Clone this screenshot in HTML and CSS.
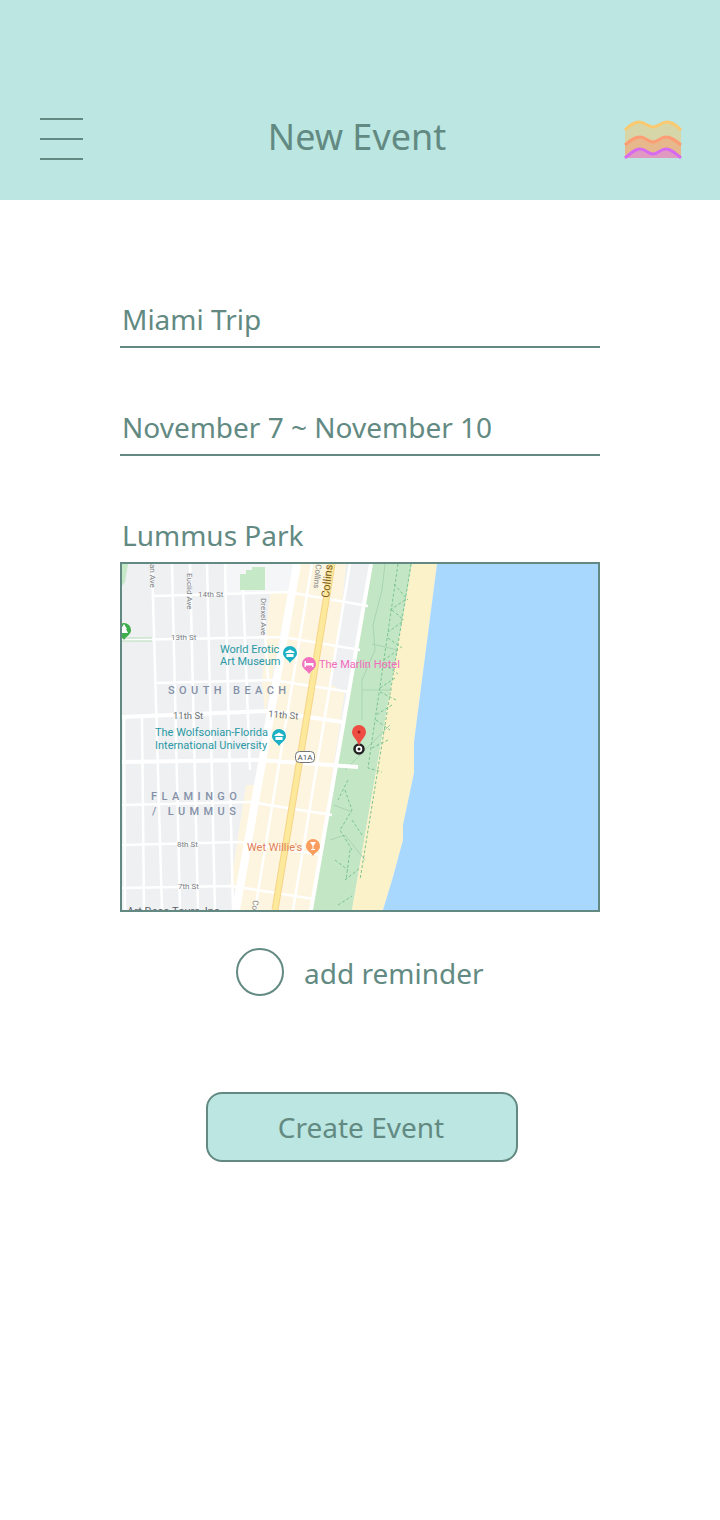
FILE: index.html
```html
<!DOCTYPE html>
<html lang="en">
<head>
  <meta charset="UTF-8">
  <meta name="viewport" content="width=device-width, initial-scale=1.0">
  <title>New Event</title>
  <link rel="stylesheet" href="styles.css">
</head>
<body>
  <!-- top bar -->
  <header class="top-bar">
    <div class="menu-icon"><span></span><span></span><span></span></div>
    <h1 class="top-title">New Event</h1>
    <svg class="logo" viewBox="0 0 60 42" width="60" height="42">
      <path d="M2 11C8 5 12 3 16 3C22 3 25 8 30 8C35 8 38 3 44 3C48 3 52 5 58 11V39H2Z" fill="#d6d6a8"/>
      <path d="M2 26C8 21 12 18 17 18C23 18 25 23 30 23C35 23 37 18 43 18C48 18 52 21 58 26V39H2Z" fill="#e6b88c"/>
      <path d="M2 39C8 34 12 30 17 30C23 30 25 35 30 35C35 35 37 30 43 30C48 30 52 34 58 39Z" fill="#e09ac2"/>
      <path d="M2 11C8 5 12 3 16 3C22 3 25 8 30 8C35 8 38 3 44 3C48 3 52 5 58 11" fill="none" stroke="#fbc96f" stroke-width="3"/>
      <path d="M2 26C8 21 12 18 17 18C23 18 25 23 30 23C35 23 37 18 43 18C48 18 52 21 58 26" fill="none" stroke="#fd9d74" stroke-width="3"/>
      <path d="M2 39C8 34 12 30 17 30C23 30 25 35 30 35C35 35 37 30 43 30C48 30 52 34 58 39" fill="none" stroke="#d76bf0" stroke-width="3"/>
    </svg>
  </header>

  <!-- form -->
  <main class="event-form">
    <div class="field">Miami Trip</div>
    <div class="field">November 7 ~ November 10</div>
    <div class="field field-plain">Lummus Park</div>

    <div class="map-box">
      <svg class="map" viewBox="122 564 476 346" width="476" height="346">
        <rect x="122" y="564" width="476" height="346" fill="#eef0f2"/>
        <rect x="225" y="564" width="70" height="29" fill="#f5f6f7"/>
        <path d="M240 574H246V570H252V567H265V590H240Z" fill="#c5e8c6"/>
        <path d="M122 564H128L125 582L122 586Z" fill="#c5e8c6"/>

        <!-- cream blocks -->
        <path d="M297 564H346L335 680L345 690L312 910H236Z" fill="#fdf5df"/>
        <path d="M348 564H368L345 692L330 684Z" fill="#eef0f2"/>
        <path d="M270 594L289 590L265 715L262 680Z" fill="#fdf5df"/>
        <path d="M246 785L258 785L240 890L230 888Z" fill="#fdf5df"/>

        <!-- park, beach, water -->
        <path d="M371 564H412L352 910H311Z" fill="#c3e7c5"/>
        <path d="M412 564H437L414 742V773L403 825V840L393 877L383 910H352Z" fill="#fbf2ca"/>
        <path d="M437 564H598V910H383L393 877L403 840V825L414 773V742Z" fill="#a9d8fe"/>

        <!-- park paths -->
        <g fill="none" stroke="#a9d3b3" stroke-width="1">
          <path d="M385 564L382 590L373 625L375 650L362 680V720"/>
          <path d="M372 644L398 650M362 690L392 690M345 770L390 725M330 840L345 835L365 860M334 805L352 812"/>
        </g>
        <g fill="none" stroke="#7cc48e" stroke-width="1" stroke-dasharray="3 2">
          <path d="M411 564L360 880"/>
          <path d="M398 564L368 768L382 772"/>
          <path d="M394 584L408 600M405 600L390 610M392 610L404 620M402 622L388 632M388 638L402 648M398 650L384 660M384 664L398 674M395 678L380 688M380 692L396 700M392 705L376 715M376 720L390 730"/>
          <path d="M372 748L388 740M345 790L352 810L340 830L352 850M345 880L360 868M338 905L352 896"/>
          <path d="M348 780L338 800M352 820L362 835M350 850L346 880M335 860L348 870"/>
        </g>

        <!-- streets -->
        <g fill="none" stroke="#fff" stroke-width="2.500">
          <path d="M152 564L162 910M172 564L180 910M190 564L198 910M207 564L215 910M225 564L233 910"/>
          <path d="M243 590L250 770M263 600L268 680M124 715L125 910M142 715L144 910"/>
          <path d="M312 564L255 910M350 564L293 910"/>
          <path d="M154 596L288 592L368 606"/>
          <path d="M122 640L283 637L360 650"/>
          <path d="M154 683L272 680L350 692"/>
          <path d="M122 805L250 802L332 815"/>
          <path d="M122 845L240 842L322 855"/>
          <path d="M122 888L232 886L314 899"/>
          <path d="M122 717L268 711L342 722" stroke-width="4"/>
          <path d="M122 762L258 760L358 767" stroke-width="4"/>
          <path d="M371 564L311 910" stroke-width="4"/>
          <path d="M297 564L236 910" stroke-width="8"/>
        </g>
        <path d="M332 564L275 910" fill="none" stroke="#f6d488" stroke-width="7"/>
        <path d="M332 564L275 910" fill="none" stroke="#fde99b" stroke-width="5"/>
        <path d="M122 638H152M122 641H152" fill="none" stroke="#b7dcb9" stroke-width="1"/>

        <!-- street names -->
        <g class="map-street">
          <text x="198" y="597">14th St</text>
          <text x="171" y="640">13th St</text>
          <text x="177" y="847">8th St</text>
          <text x="178" y="889">7th St</text>
          <text x="150" y="564" transform="rotate(90 150 564)">an Ave</text>
          <text x="187" y="573" transform="rotate(90 187 573)">Euclid Ave</text>
          <text x="261" y="598" transform="rotate(90 261 598)">Drexel Ave</text>
          <text x="316" y="564" transform="rotate(96 316 564)">Collins</text>
          <text x="253" y="900" transform="rotate(96 253 900)">Collins</text>
        </g>
        <g class="map-street-big">
          <text x="173" y="719">11th St</text>
          <text x="268" y="717" transform="rotate(5 268 717)">11th St</text>
        </g>
        <text class="map-road" x="329" y="598" transform="rotate(-84 329 598)">Collins</text>

        <!-- areas -->
        <g class="map-area">
          <text x="168" y="694">SOUTH BEACH</text>
          <text x="151" y="800">FLAMINGO</text>
          <text x="152" y="815">/ LUMMUS</text>
        </g>

        <!-- places -->
        <g class="map-place teal">
          <text x="220" y="653">World Erotic</text>
          <text x="220" y="665">Art Museum</text>
          <text x="155" y="736">The Wolfsonian-Florida</text>
          <text x="155" y="749">International University</text>
        </g>
        <text class="map-place pink" x="319" y="668">The Marlin Hotel</text>
        <text class="map-place orange" x="247" y="851">Wet Willie's</text>
        <text class="map-place dark" x="127" y="915">Art Deco Tours, Inc</text>

        <path d="M290 663C288 659 283 658 283 653A7 7 0 0 1 297 653C297 658 292 659 290 663Z" fill="#1cb0c4"/>
        <path d="M285.500 652L290 649.500L294.500 652V653H285.500ZM286.500 654H293.500V657H286.500Z" fill="#fff"/>
        <path d="M279 746C277 742 272 741 272 736A7 7 0 0 1 286 736C286 741 281 742 279 746Z" fill="#1cb0c4"/>
        <path d="M274.500 735L279 732.500L283.500 735V736H274.500ZM275.500 737H282.500V740H275.500Z" fill="#fff"/>
        <path d="M309 674C307 670 302 669 302 664A7 7 0 0 1 316 664C316 669 311 670 309 674Z" fill="#f272bf"/>
        <path d="M304.500 661H306V663H313.500V667H312V665.500H306V667H304.500Z" fill="#fff"/>
        <path d="M313 856C311 852 306 851 306 846A7 7 0 0 1 320 846C320 851 315 852 313 856Z" fill="#fb9d5e"/>
        <path d="M310 842H316L313.500 846V849H315V850H311V849H312.500V846Z" fill="#fff"/>
        <path d="M124 640C122 636 117 635 117 630A7 7 0 0 1 131 630C131 635 126 636 124 640Z" fill="#3ead4b"/>
        <path d="M124 624L127 629H126L128 633H120L122 629H121Z" fill="#fff"/>

        <!-- A1A shield -->
        <rect x="295.500" y="751.500" width="19" height="11" rx="4" fill="#fff" stroke="#70757a"/>
        <text class="map-shield" x="305" y="760">A1A</text>

        <!-- pin -->
        <circle cx="359" cy="749" r="4.500" fill="#fff" stroke="#222" stroke-width="2.500"/>
        <circle cx="359" cy="749" r="1.500" fill="#222"/>
        <path d="M359 746C357 739 352 737 352 732A7 7 0 0 1 366 732C366 737 361 739 359 746Z" fill="#ee4d43"/>
        <circle cx="359" cy="732" r="1.500" fill="#a51c12"/>
      </svg>
    </div>

    <div class="reminder">
      <span class="radio"></span>
      <span class="reminder-text">add reminder</span>
    </div>

    <button class="create-btn">Create Event</button>
  </main>
</body>
</html>
```

FILE: styles.css
```css
* {
  margin: 0;
  padding: 0;
  box-sizing: border-box;
}
html, body {
  width: 100%;
  height: 100%;
  background-color: #fff;
  overflow: hidden;
  font-family: "Noto Sans", "Open Sans", sans-serif;
  color: #628a82;
}

.top-bar {
  height: 200px;
  background-color: #bce6e1;
  display: flex;
  align-items: flex-end;
  justify-content: space-between;
  padding: 0 37px 40px 40px;
}
.menu-icon {
  width: 43px;
  height: 42px;
  display: flex;
  flex-direction: column;
  justify-content: space-between;
}
.menu-icon span {
  display: block;
  height: 2px;
  background-color: #628a82;
}
.top-title {
  font-size: 36px;
  font-weight: 400;
  line-height: 50px;
  margin: 0 0 -2px 8px;
}
.logo {
  display: block;
  margin-bottom: -1px;
}

.event-form {
  width: 480px;
  margin: 0 auto;
  padding-top: 100px;
  display: flex;
  flex-direction: column;
}
.field {
  height: 48px;
  margin-bottom: 60px;
  padding-left: 2px;
  font-size: 28px;
  line-height: 38px;
  border-bottom: 2px solid #628a82;
}
.field-plain {
  height: 46px;
  margin-bottom: 0;
  border-bottom: none;
}

.map-box {
  height: 350px;
  border: 2px solid #628a82;
  overflow: hidden;
}
.map {
  display: block;
}
.map text {
  font-family: Roboto, sans-serif;
}
.map-street {
  font-size: 8px;
  fill: #7d8286;
}
.map-street-big {
  font-size: 9.500px;
  fill: #6f7478;
}
.map-road {
  font-size: 11px;
  fill: #7a5a22;
}
.map-area {
  font-size: 11px;
  font-weight: 500;
  letter-spacing: 4.400px;
  fill: #8590a8;
}
.map-place {
  font-size: 11px;
}
.teal {
  fill: #2a98a4;
}
.pink {
  fill: #f26cbd;
}
.orange {
  fill: #e0805a;
}
.dark {
  fill: #5f6368;
}
.map-shield {
  font-size: 8px;
  text-anchor: middle;
  fill: #4a4f54;
}

.reminder {
  height: 48px;
  display: flex;
  align-items: center;
  gap: 20px;
  margin: 36px 0 0 116px;
  font-size: 28px;
  line-height: 48px;
}
.reminder-text {
  padding-top: 2px;
}
.radio {
  width: 48px;
  height: 48px;
  border: 2px solid #628a82;
  border-radius: 50%;
}

.create-btn {
  width: 312px;
  height: 70px;
  margin: 96px 0 0 86px;
  padding-right: 2px;
  background-color: #bce6e1;
  border: 2px solid #628a82;
  border-radius: 16px;
  font-family: "Noto Sans", "Open Sans", sans-serif;
  font-size: 28px;
  color: #628a82;
}
```
